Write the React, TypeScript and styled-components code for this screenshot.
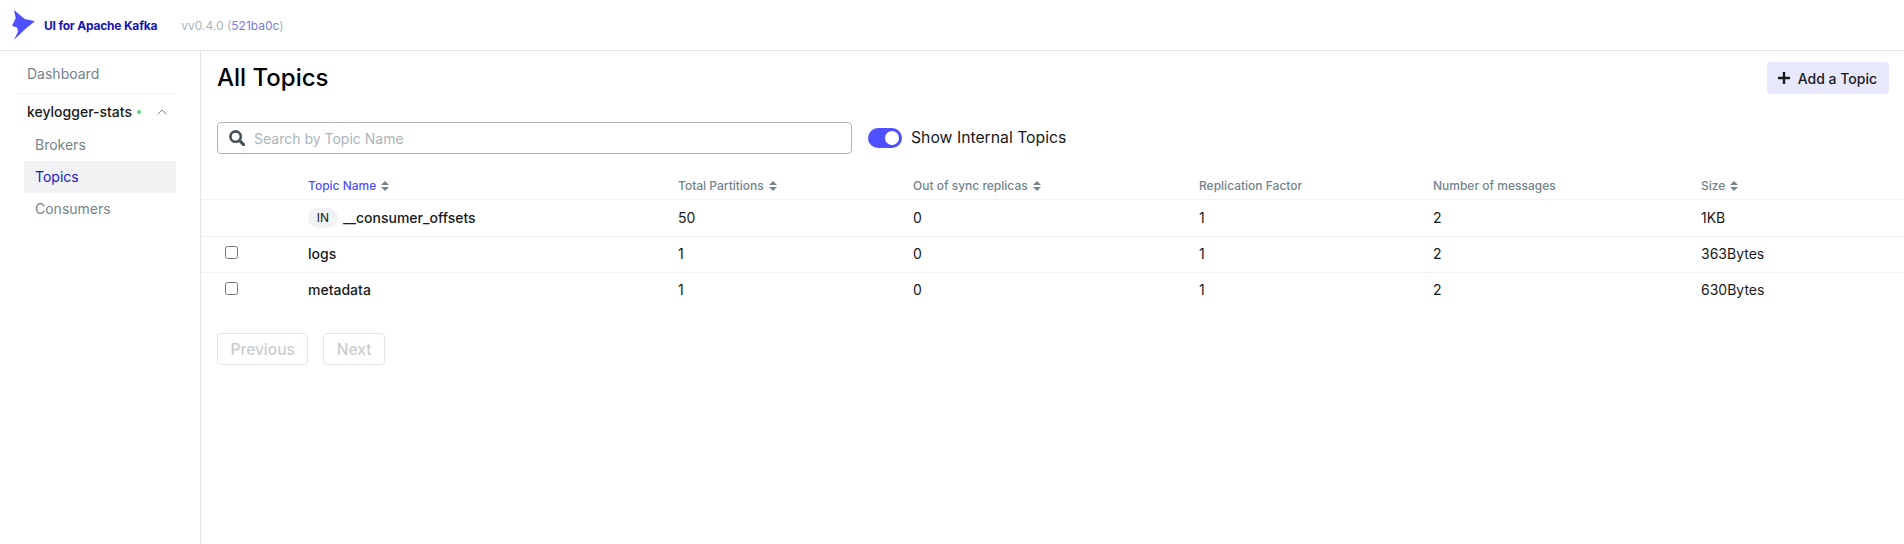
import React from 'react';
import styled, { createGlobalStyle } from 'styled-components';

const GlobalStyle = createGlobalStyle`
  html, body { margin: 0; padding: 0; background: #fff; }
  body { font-family: Inter, "Liberation Sans", sans-serif; font-size: 14px; color: #171a1c; }
  * { box-sizing: border-box; }
`;

const Page = styled.div`
  height: 544px;
  display: flex;
  flex-direction: column;
  overflow: hidden;
`;
const Navbar = styled.header`
  height: 51px;
  flex: none;
  display: flex;
  align-items: center;
  border-bottom: 1px solid #e3e6e8;
  padding-left: 12px;
`;
const Brand = styled.div`
  display: flex;
  align-items: center;
  gap: 8px;
  font-size: 12px;
  font-weight: 700;
  color: #1414b8;
  letter-spacing: -0.2px;
`;
const Version = styled.div`
  margin-left: 24px;
  font-size: 12px;
  color: #abb5ba;
  a { color: #7a7ae6; }
`;
const Body = styled.div`
  flex: 1;
  display: flex;
  min-height: 0;
`;
const Sidebar = styled.aside`
  width: 201px;
  flex: none;
  border-right: 1px solid #e3e6e8;
  padding: 3px 24px 0 16px;
`;
const DashLink = styled.div`
  height: 40px;
  display: flex;
  align-items: center;
  padding-left: 11px;
  font-size: 14px;
  color: #73848c;
  border-bottom: 1px solid #f1f2f3;
`;
const ClusterRow = styled.div`
  height: 35px;
  display: flex;
  align-items: center;
  padding-left: 11px;
  font-size: 14px;
  font-weight: 500;
  color: #171a1c;
`;
const StatusDot = styled.span`
  width: 4px;
  height: 4px;
  border-radius: 50%;
  background: #5cd685;
  margin-left: 5px;
`;
const Chevron = styled.svg`
  margin-left: 16px;
  width: 10px;
  height: 6px;
`;
const MenuItem = styled.div<{ $active?: boolean }>`
  height: 32px;
  margin-left: 8px;
  display: flex;
  align-items: center;
  padding: 0 0 2px 11px;
  font-size: 14px;
  color: ${p => (p.$active ? '#1717cf' : '#73848c')};
  background: ${p => (p.$active ? '#f1f2f3' : 'transparent')};
`;
const Main = styled.main`
  flex: 1;
  min-width: 0;
`;
const TitleBar = styled.div`
  display: flex;
  justify-content: space-between;
  align-items: center;
  height: 54px;
  padding: 0 15px 0 16px;
`;
const Title = styled.h1`
  margin: 0;
  font-size: 24px;
  line-height: 32px;
  font-weight: 500;
  color: #000;
`;
const AddButton = styled.button`
  height: 32px;
  padding: 0 12px 0 11px;
  display: flex;
  align-items: center;
  gap: 8px;
  border: none;
  border-radius: 4px;
  background: #e8e8fc;
  font: 500 14px Inter, sans-serif;
  color: #171a1c;
`;
const Controls = styled.div`
  display: flex;
  align-items: center;
  gap: 16px;
  padding: 17px 16px 0;
`;
const SearchBox = styled.div`
  width: 635px;
  height: 32px;
  display: flex;
  align-items: center;
  gap: 9px;
  padding-left: 11px;
  border: 1px solid #abb5ba;
  border-radius: 4px;
  color: #abb5ba;
  font-size: 14px;
`;
const ToggleLabel = styled.div`
  display: flex;
  align-items: center;
  gap: 9px;
  font-size: 15.75px;
  color: #171a1c;
`;
const ToggleText = styled.span`
  padding-bottom: 2px;
`;
const Toggle = styled.span`
  width: 34px;
  height: 20px;
  border-radius: 20px;
  background: #4f4ffe;
  display: flex;
  align-items: center;
  justify-content: flex-end;
  padding-right: 3px;
  &::after {
    content: '';
    width: 14px;
    height: 14px;
    border-radius: 50%;
    background: #fff;
  }
`;
const Table = styled.table`
  width: 100%;
  margin-top: 13px;
  table-layout: fixed;
  border-collapse: separate;
  border-spacing: 0;
  tbody tr:first-child td { height: 37px; }
`;
const Th = styled.th<{ $active?: boolean }>`
  height: 33px;
  padding: 0 0 6px 24px;
  vertical-align: bottom;
  text-align: left;
  font-size: 12px;
  font-weight: 500;
  line-height: 15px;
  white-space: nowrap;
  color: ${p => (p.$active ? '#4f4ffe' : '#73848c')};
  border-bottom: 1px solid #f1f2f3;
`;
const Td = styled.td`
  height: 36px;
  padding: 0 0 2px 24px;
  font-size: 14px;
  white-space: nowrap;
  color: #171a1c;
  border-bottom: 1px solid #f1f2f3;
`;
const LastRowTd = styled(Td)`
  padding-bottom: 3px;
  border-bottom: none;
`;
const NameWrap = styled.div`
  display: flex;
  align-items: center;
  font-weight: 500;
`;
const Tag = styled.span`
  width: 30px;
  height: 20px;
  line-height: 20px;
  margin: 2px 5px 0 0;
  border-radius: 16px;
  background: #f1f2f3;
  text-align: center;
  font-size: 12px;
  font-weight: 400;
  color: #171a1c;
`;
const CheckBox = styled.input`
  display: block;
  width: 13px;
  height: 13px;
  margin: 0 0 2px;
`;
const Pagination = styled.div`
  display: flex;
  gap: 15px;
  padding: 24px 16px 0;
`;
const PageButton = styled.button`
  height: 32px;
  padding: 0 12.5px;
  border: 1px solid #e3e6e8;
  border-radius: 4px;
  background: #fff;
  font: 500 15.5px Inter, sans-serif;
  color: #c7ced1;
`;

const SortIcon: React.FC = () => (
  <svg width="8" height="10" viewBox="0 0 8 10" style={{ marginLeft: 5, verticalAlign: -1 }}>
    <path d="M4 0L8 4H0z" fill="#73848c" />
    <path d="M4 10L0 6h8z" fill="#73848c" />
  </svg>
);

const Logo: React.FC = () => (
  <svg width="24" height="30" viewBox="0 0 24 30">
    <path
      d="M2 0L12.7 9L23 11.2L14.7 17.7L2 29.7L6 21.7L5.3 17.7L0 15.7L3.7 8.3z"
      fill="#4f4ffe"
    />
  </svg>
);

const SearchIcon: React.FC = () => (
  <svg width="16" height="16" viewBox="0 0 16 16">
    <circle cx="6.6" cy="6.6" r="5.2" fill="none" stroke="#454f54" strokeWidth="2.6" />
    <path d="M10.6 10.6L14.6 14.6" stroke="#454f54" strokeWidth="3" strokeLinecap="round" />
  </svg>
);

const PlusIcon: React.FC = () => (
  <svg width="12" height="12" viewBox="0 0 12 12">
    <path d="M6 0v12M0 6h12" stroke="#171a1c" strokeWidth="2.4" />
  </svg>
);

const columns = [
  { title: 'Total Partitions', sort: true },
  { title: 'Out of sync replicas', sort: true },
  { title: 'Replication Factor', sort: false },
  { title: 'Number of messages', sort: false },
  { title: 'Size', sort: true },
];
const colWidths = [83, 370, 235, 286, 234, 268];

const topics = [
  { name: '__consumer_offsets', internal: true, partitions: 50, size: '1KB' },
  { name: 'logs', internal: false, partitions: 1, size: '363Bytes' },
  { name: 'metadata', internal: false, partitions: 1, size: '630Bytes' },
];

const App: React.FC = () => (
  <Page>
    <GlobalStyle />
    <Navbar>
      <Brand>
        <Logo />
        UI for Apache Kafka
      </Brand>
      <Version>
        vv0.4.0 (<a>521ba0c</a>)
      </Version>
    </Navbar>
    <Body>
      <Sidebar>
        <DashLink>Dashboard</DashLink>
        <ClusterRow>
          keylogger-stats
          <StatusDot />
          <Chevron viewBox="0 0 10 6">
            <path d="M.7 5.3L5 1l4.3 4.3" fill="none" stroke="#73848c" strokeWidth="1" />
          </Chevron>
        </ClusterRow>
        <MenuItem>Brokers</MenuItem>
        <MenuItem $active>Topics</MenuItem>
        <MenuItem>Consumers</MenuItem>
      </Sidebar>
      <Main>
        <TitleBar>
          <Title>All Topics</Title>
          <AddButton>
            <PlusIcon />
            Add a Topic
          </AddButton>
        </TitleBar>
        <Controls>
          <SearchBox>
            <SearchIcon />
            Search by Topic Name
          </SearchBox>
          <ToggleLabel>
            <Toggle />
            <ToggleText>Show Internal Topics</ToggleText>
          </ToggleLabel>
        </Controls>
        <Table>
          <colgroup>
            {colWidths.map((w, i) => (
              <col key={i} style={{ width: w }} />
            ))}
            <col />
          </colgroup>
          <thead>
            <tr>
              <Th />
              <Th $active>
                Topic Name
                <SortIcon />
              </Th>
              {columns.map(c => (
                <Th key={c.title}>
                  {c.title}
                  {c.sort && <SortIcon />}
                </Th>
              ))}
            </tr>
          </thead>
          <tbody>
            {topics.map((t, i) => {
              const Cell = i === topics.length - 1 ? LastRowTd : Td;
              return (
                <tr key={t.name}>
                  <Cell>{!t.internal && <CheckBox type="checkbox" />}</Cell>
                  <Cell>
                    <NameWrap>
                      {t.internal && <Tag>IN</Tag>}
                      {t.name}
                    </NameWrap>
                  </Cell>
                  <Cell>{t.partitions}</Cell>
                  <Cell>0</Cell>
                  <Cell>1</Cell>
                  <Cell>2</Cell>
                  <Cell>{t.size}</Cell>
                </tr>
              );
            })}
          </tbody>
        </Table>
        <Pagination>
          <PageButton>Previous</PageButton>
          <PageButton>Next</PageButton>
        </Pagination>
      </Main>
    </Body>
  </Page>
);

export default App;
